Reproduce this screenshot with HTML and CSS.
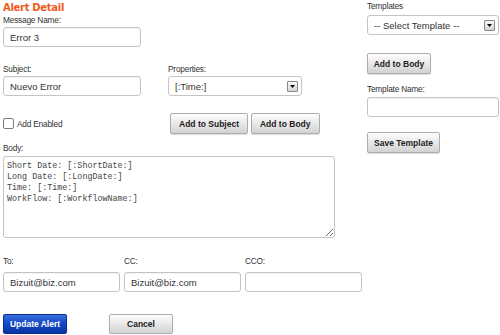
FILE: index.html
```html
<!DOCTYPE html>
<html lang="es">
<head>
    <meta charset="UTF-8">
    <title>Alert Detail</title>
    <link rel="stylesheet" href="styles.css">
</head>
<body>
    <div class="page">
        <div class="main">
            <h1 class="title">Alert Detail</h1>

            <label class="lbl">Message Name:</label>
            <input class="txt name-input" type="text" value="Error 3">

            <div class="row subject-row">
                <div class="col subject-col">
                    <label class="lbl">Subject:</label>
                    <input class="txt name-input" type="text" value="Nuevo Error">
                </div>
                <div class="col props-col">
                    <label class="lbl">Properties:</label>
                    <div class="select props-select">
                        <span>[:Time:]</span>
                        <span class="arrow"><svg width="5" height="3" viewBox="0 0 5 3"><path d="M0 0h5L2.5 3z" fill="#000"/></svg></span>
                    </div>
                </div>
            </div>

            <div class="row check-row">
                <label class="check"><input type="checkbox"> Add Enabled</label>
                <div class="btns">
                    <button class="btn">Add to Subject</button>
                    <button class="btn">Add to Body</button>
                </div>
            </div>

            <label class="lbl body-lbl">Body:</label>
            <textarea class="body-text">Short Date: [:ShortDate:]
Long Date: [:LongDate:]
Time: [:Time:]
WorkFlow: [:WorkflowName:]</textarea>

            <div class="row mail-row">
                <div class="col mail-col">
                    <label class="lbl">To:</label>
                    <input class="txt" type="text" value="Bizuit@biz.com">
                </div>
                <div class="col mail-col">
                    <label class="lbl">CC:</label>
                    <input class="txt" type="text" value="Bizuit@biz.com">
                </div>
                <div class="col mail-col">
                    <label class="lbl">CCO:</label>
                    <input class="txt" type="text" value="">
                </div>
            </div>

            <div class="row action-row">
                <button class="btn btn-blue">Update Alert</button>
                <button class="btn btn-cancel">Cancel</button>
            </div>
        </div>

        <div class="side">
            <label class="lbl">Templates</label>
            <div class="select tpl-select">
                <span>-- Select Template --</span>
                <span class="arrow"><svg width="5" height="3" viewBox="0 0 5 3"><path d="M0 0h5L2.5 3z" fill="#000"/></svg></span>
            </div>
            <button class="btn side-add">Add to Body</button>
            <label class="lbl tpl-lbl">Template Name:</label>
            <input class="txt tpl-input" type="text" value="">
            <button class="btn side-save">Save Template</button>
        </div>
    </div>
</body>
</html>
```

FILE: styles.css
```css
body {
    margin: 0;
    background-color: #fff;
    color: #333;
    font-family: 'Liberation Sans', Arial, sans-serif;
}
.page {
    display: flex;
    padding: 0 0 0 3px;
}
.main {
    width: 360px;
}
.side {
    margin-left: 4px;
    width: 132px;
    display: flex;
    flex-direction: column;
    align-items: flex-start;
}
.title {
    margin: 1px 0 0;
    font-family: 'DejaVu Sans', Verdana, sans-serif;
    font-size: 10px;
    line-height: 13px;
    font-weight: bold;
    color: #f05a1e;
    letter-spacing: -0.3px;
}
.lbl {
    display: block;
    font-size: 8.3px;
    line-height: 12px;
    letter-spacing: -0.2px;
    color: #333;
}
.txt {
    display: block;
    box-sizing: border-box;
    height: 20px;
    margin: 1px 0 0;
    padding: 0 6px;
    border: 1px solid #c4c4c4;
    border-radius: 3px;
    box-shadow: inset 0 1px 1px rgba(0, 0, 0, 0.06);
    font-family: 'Liberation Sans', Arial, sans-serif;
    font-size: 9.5px;
    color: #333;
    width: 100%;
}
.name-input {
    width: 138px;
}
.row {
    display: flex;
}
.subject-row {
    margin-top: 16px;
}
.subject-col {
    width: 165px;
}
.select {
    box-sizing: border-box;
    height: 20px;
    margin-top: 1px;
    border: 1px solid #c4c4c4;
    border-radius: 3px;
    display: flex;
    align-items: center;
    justify-content: space-between;
    padding: 0 3px 0 6px;
    font-size: 9.5px;
    color: #333;
}
.props-select {
    width: 134px;
}
.tpl-select {
    width: 132px;
    margin-top: 3px;
}
.arrow {
    box-sizing: border-box;
    width: 11px;
    height: 11px;
    border: 1px solid #888;
    border-radius: 1px;
    background: linear-gradient(#fafafa, #d4d4d4);
    display: flex;
    align-items: center;
    justify-content: center;
}
.arrow svg {
    display: block;
}
.check-row {
    margin-top: 17px;
    align-items: center;
}
.check {
    display: flex;
    align-items: center;
    width: 167px;
    font-size: 8.3px;
    letter-spacing: -0.2px;
}
.check input {
    appearance: none;
    width: 11px;
    height: 11px;
    margin: 0 3px 0 0;
    border: 1px solid #7a7a7a;
    border-radius: 2px;
    background: #fff;
}
.btns {
    display: flex;
    gap: 3px;
}
.btn {
    box-sizing: border-box;
    height: 21px;
    padding: 0 8px;
    border: 1px solid #adadad;
    border-radius: 2px;
    background: linear-gradient(#fdfdfd, #e6e6e6 55%, #d2d2d2);
    box-shadow: 0 1px 1px rgba(0, 0, 0, 0.15);
    font-family: 'Liberation Sans', Arial, sans-serif;
    font-size: 8.5px;
    font-weight: bold;
    color: #222;
    white-space: nowrap;
    cursor: pointer;
}
.body-lbl {
    margin-top: 8px;
}
.body-text {
    display: block;
    box-sizing: border-box;
    width: 332px;
    height: 82px;
    margin: 2px 0 0;
    padding: 4px 3px;
    border: 1px solid #c4c4c4;
    border-radius: 3px;
    font-family: 'Liberation Mono', 'Courier New', monospace;
    font-size: 8.4px;
    line-height: 11px;
    color: #444;
}
.mail-row {
    margin-top: 17px;
    gap: 4px;
}
.mail-col {
    width: 117px;
}
.mail-col .txt {
    margin-top: 5px;
}
.action-row {
    margin-top: 22px;
}
.btn-blue {
    width: 64px;
    height: 20px;
    padding: 0;
    border-color: #0b2e8e;
    background: linear-gradient(#3b6ee0, #1446c4 50%, #0a35a6);
    color: #fff;
}
.btn-cancel {
    width: 64px;
    height: 20px;
    padding: 0;
    margin-left: 42px;
}
.side-add {
    margin-top: 18px;
    width: 64px;
    padding: 0;
}
.tpl-lbl {
    margin-top: 9px;
}
.tpl-input {
    width: 132px;
    margin-top: 2px;
}
.side-save {
    margin-top: 15px;
    width: 73px;
    padding: 0;
}
```
